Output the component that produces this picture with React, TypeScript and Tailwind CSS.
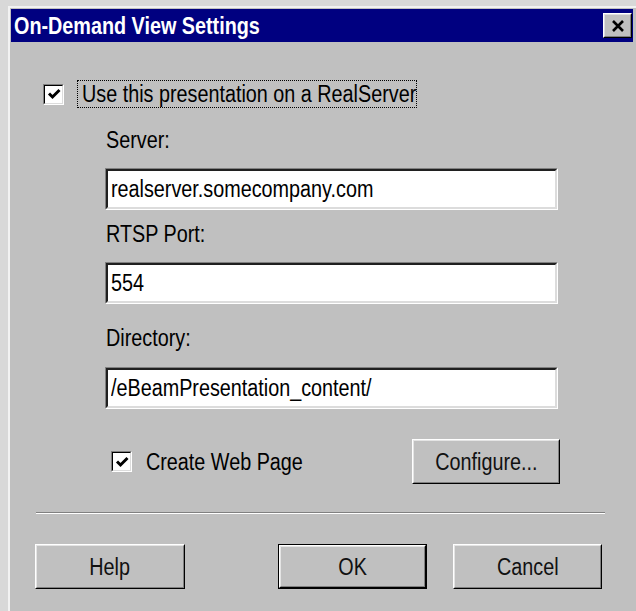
import type { ReactNode } from "react";

// the dialog face is drawn with a tall, narrow sans: Liberation Sans squeezed horizontally
function Txt({ children, center = false }: { children: ReactNode; center?: boolean }) {
  return (
    <span className={`inline-block whitespace-nowrap scale-x-[0.86] ${center ? "origin-center" : "origin-left"}`}>
      {children}
    </span>
  );
}

// sunken white box with a heavy check
function CheckBox() {
  return (
    <div className="h-[21px] w-[21px] shrink-0 border border-t-[#808080] border-l-[#808080] border-r-white border-b-white">
      <div className="flex h-full w-full items-center justify-center border border-t-black border-l-black border-r-[#dcdcdc] border-b-[#dcdcdc] bg-white">
        <svg viewBox="0 0 16 16" className="h-[16px] w-[16px]">
          <path d="M3 7.5 L6.5 11 L13.5 4" fill="none" stroke="#000" strokeWidth="3" />
        </svg>
      </div>
    </div>
  );
}

function Field({ value, className = "" }: { value: string; className?: string }) {
  return (
    <div className={`h-[42px] w-[453px] border border-t-[#808080] border-l-[#808080] border-r-white border-b-white ${className}`}>
      <div className="flex h-full items-center border-2 border-t-[#202020] border-l-[#202020] border-r-[#dcdcdc] border-b-[#dcdcdc] bg-white pl-[3px] text-black">
        <Txt>{value}</Txt>
      </div>
    </div>
  );
}

function Button({ children, main = false, className = "" }: { children: ReactNode; main?: boolean; className?: string }) {
  return (
    <div className={`h-[45px] ${main ? "border border-black" : ""} ${className}`}>
      <div className="h-full w-full border border-t-white border-l-white border-r-black border-b-black">
        <div className="flex h-full w-full items-center justify-center border border-t-[#e4e4e4] border-l-[#e4e4e4] border-r-[#808080] border-b-[#808080] text-[#111]">
          <Txt center>{children}</Txt>
        </div>
      </div>
    </div>
  );
}

export default function App() {
  return (
    <div className="h-[611px] w-[636px] overflow-hidden bg-[#d8d8d8] pl-[8px] pt-[6px] font-['Liberation_Sans',Arial,sans-serif] text-[23px] leading-[24px] text-black">
      <div className="h-full border-l-2 border-t-2 border-[#f2f2f2] bg-[#c0c0c0] pl-[1px] pr-[3px] pt-[1px]">
        {/* title bar */}
        <div className="flex h-[33px] items-center justify-between bg-[#000080] pl-[3px] pr-[1px]">
          <span className="font-bold text-white">
            <Txt>On-Demand View Settings</Txt>
          </span>
          <div className="h-[25px] w-[29px] border border-t-white border-l-white border-r-black border-b-black bg-[#c0c0c0]">
            <div className="flex h-full w-full items-center justify-center border border-t-[#dfdfdf] border-l-[#dfdfdf] border-r-[#808080] border-b-[#808080]">
              <svg viewBox="0 0 14 12" className="h-[12px] w-[14px]">
                <path d="M2 1 L12 11 M12 1 L2 11" stroke="#000" strokeWidth="2.6" />
              </svg>
            </div>
          </div>
        </div>

        <div className="flex flex-col">
          <div className="ml-[32px] mt-[38px] flex h-[28px] items-center">
            <CheckBox />
            <span className="ml-[13px] flex h-full w-[340px] items-center border border-dotted border-black px-[4px]">
              <Txt>Use this presentation on a RealServer</Txt>
            </span>
          </div>

          <div className="ml-[94px] flex flex-col">
            <span className="mt-[20px] pl-[1px]">
              <Txt>Server:</Txt>
            </span>
            <Field className="mt-[16px]" value="realserver.somecompany.com" />
            <span className="mt-[12px] pl-[1px]">
              <Txt>RTSP Port:</Txt>
            </span>
            <Field className="mt-[16px]" value="554" />
            <span className="mt-[22px] pl-[1px]">
              <Txt>Directory:</Txt>
            </span>
            <Field className="mt-[17px]" value="/eBeamPresentation_content/" />
          </div>

          <div className="ml-[100px] mt-[30px] flex h-[45px] w-[449px] items-center">
            <CheckBox />
            <span className="ml-[14px]">
              <Txt>Create Web Page</Txt>
            </span>
            <Button className="ml-auto w-[148px]">Configure...</Button>
          </div>

          <div className="ml-[25px] mt-[28px] h-[2px] w-[569px] border-t border-b border-t-[#808080] border-b-white" />

          <div className="ml-[24px] mt-[30px] flex">
            <Button className="w-[150px]">Help</Button>
            <Button main className="ml-[93px] w-[149px]">
              OK
            </Button>
            <Button className="ml-[26px] w-[149px]">Cancel</Button>
          </div>
        </div>
      </div>
    </div>
  );
}
